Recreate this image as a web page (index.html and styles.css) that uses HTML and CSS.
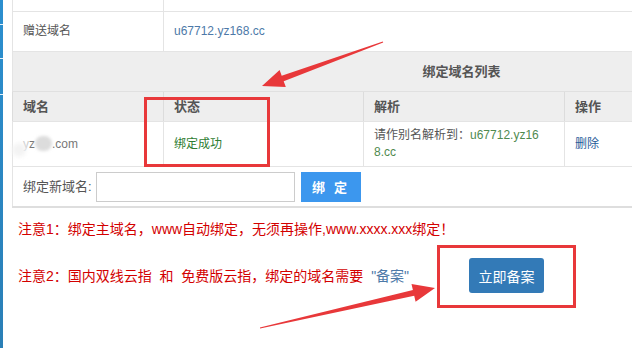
FILE: index.html
```html
<!DOCTYPE html>
<html lang="zh-CN">
<head>
<meta charset="utf-8">
<title>绑定域名</title>
<link rel="stylesheet" href="styles.css">
</head>
<body>
<div class="page">
  <div class="sidebar-edge"></div>
  <main class="main">
    <table class="info">
      <colgroup><col class="c1"><col class="c2"><col class="c3"><col class="c4"></colgroup>
      <tr class="r-top"><td></td><td colspan="3"></td></tr>
      <tr class="r-gift"><td>赠送域名</td><td colspan="3" class="link">u67712.yz168.cc</td></tr>
      <tr class="r-title"><th colspan="4">绑定域名列表</th></tr>
      <tr class="r-head"><th>域名</th><th>状态</th><th>解析</th><th>操作</th></tr>
      <tr class="r-data">
        <td class="domain"><span class="fade">y</span>z<span class="blob"></span>.com<span class="glow"></span></td>
        <td class="ok">绑定成功</td>
        <td class="cname">请作别名解析到：<span class="green">u67712.yz16</span><span class="green">8.cc</span></td>
        <td><a class="del">删除</a></td>
      </tr>
      <tr class="r-bind">
        <td colspan="4">
          <div class="bind-form">
            <label class="bind-label">绑定新域名:</label>
            <input class="bind-input" type="text">
            <button class="bind-btn">绑 定</button>
          </div>
        </td>
      </tr>
    </table>
    <p class="note note1">注意1：绑定主域名，www自动绑定，无须再操作,www.xxxx.xxx绑定！</p>
    <div class="note-row">
      <p class="note">注意2：国内双线云指&nbsp;&nbsp;和&nbsp;&nbsp;免费版云指，绑定的域名需要&nbsp;&nbsp;<span class="quote">"备案"</span></p>
      <button class="beian-btn">立即备案</button>
    </div>
  </main>
</div>
<div class="mark box-status"></div>
<div class="mark box-beian"></div>
<svg class="arrows" width="632" height="348" viewBox="0 0 632 348">
  <polygon class="arrow" points="382.8,41.5 281.7,75.7 279.6,70 262,86 285.8,87 283.7,81.3 383.2,42.5"/>
  <polygon class="arrow" points="259.9,327.4 412.9,290 411.5,284.1 435,288 415.6,301.7 414.2,295.8 260.1,328.6"/>
</svg>
</body>
</html>
```

FILE: styles.css
```css
html, body {
  margin: 0;
  padding: 0;
  overflow: hidden;
  background: #fff;
}
body {
  width: 632px;
  height: 348px;
  position: relative;
  font-family: "Liberation Sans", "Noto Sans CJK SC", sans-serif;
  color: #555;
}
.page {
  display: flex;
  height: 348px;
}
.sidebar-edge {
  width: 3px;
  flex: none;
  background:
    linear-gradient(transparent 24px, #e6f2fa 24px, #e6f2fa 25px, transparent 25px,
                    transparent 58px, #e6f2fa 58px, #e6f2fa 59px, transparent 59px,
                    transparent 94px, #e6f2fa 94px, #e6f2fa 95px, transparent 95px),
    linear-gradient(#2b8fcf, #2a7fb6);
}
.main {
  flex: none;
  margin-left: 9px;
  width: 898px;
}
.info {
  width: 898px;
  table-layout: fixed;
  border-collapse: collapse;
  font-size: 12px;
  line-height: 17px;
  border-left: 1px solid #e2e2e2;
}
.c1 { width: 151px; }
.c2 { width: 200px; }
.c3 { width: 201px; }
.c4 { width: 346px; }
.info td, .info th {
  border: 1px solid #e4e4e4;
  border-top: none;
  padding: 0 10px;
  text-align: left;
  vertical-align: middle;
}
.r-top td { height: 11px; padding: 0; }
.r-gift td { height: 39px; }
.link { color: #4d79a8; }
.r-title th {
  height: 39px;
  background: #eeeeee;
  text-align: center;
  font-size: 13px;
  font-weight: bold;
  color: #555;
  border-bottom-color: #e0e0e0;
}
.r-head th {
  height: 29px;
  background: #eeeeee;
  font-size: 13px;
  font-weight: bold;
  color: #555;
  border-left-color: #dcdcdc;
  border-right-color: #dcdcdc;
}
.r-data td { height: 44px; }
.domain { color: #777; position: relative; }
.fade { color: #ccc; }
.blob {
  display: inline-block;
  width: 17px;
  height: 15px;
  vertical-align: -3px;
  border-radius: 8px;
  background: #dcdcdc;
  filter: blur(1.5px);
}
.glow {
  position: absolute;
  left: -1px;
  top: 21px;
  width: 14px;
  height: 14px;
  border-radius: 7px;
  background: #f3f3f3;
  filter: blur(2px);
}
.ok { color: #2e7d32; }
.cname {
  word-break: break-all;
  padding-right: 19px !important;
  color: #555;
}
.green { color: #4f8a4f; }
.del { color: #1f5c99; }
.r-bind td {
  height: 39px;
  border-bottom: 2px solid #dedede;
  border-right: none;
}
.bind-form {
  display: flex;
  align-items: center;
}
.bind-label {
  font-size: 13px;
  color: #555;
  width: 73px;
}
.bind-input {
  box-sizing: border-box;
  width: 199px;
  height: 30px;
  margin: 0;
  border: 1px solid #cccccc;
  padding: 0 6px;
}
.bind-btn {
  margin-left: 6px;
  box-sizing: border-box;
  width: 60px;
  height: 30px;
  border: none;
  background: #3c97ee;
  color: #fff;
  font-family: "Noto Sans CJK SC", sans-serif;
  font-weight: bold;
  font-size: 13px;
  letter-spacing: 3px;
  padding: 0;
}
.note {
  margin: 0;
  font-size: 14px;
  line-height: 20px;
  color: #d30000;
}
.note1 {
  margin: 11px 0 0 6px;
}
.note-row {
  display: flex;
  align-items: center;
  margin: 19px 0 0 6px;
}
.quote { color: #4d79a8; }
.beian-btn {
  margin-left: 60px;
  box-sizing: border-box;
  width: 75px;
  height: 35px;
  border: none;
  border-radius: 3px;
  background: #337ab7;
  color: #fff;
  font-family: "Noto Sans CJK SC", sans-serif;
  font-size: 14px;
  padding: 0;
}
.mark {
  position: absolute;
  box-sizing: border-box;
  border: 3px solid #e8383a;
}
.box-status {
  left: 144px;
  top: 97px;
  width: 126px;
  height: 70px;
}
.box-beian {
  left: 437px;
  top: 245px;
  width: 139px;
  height: 63px;
}
.arrows {
  position: absolute;
  left: 0;
  top: 0;
  pointer-events: none;
}
.arrow { fill: #e8383a; }
```
